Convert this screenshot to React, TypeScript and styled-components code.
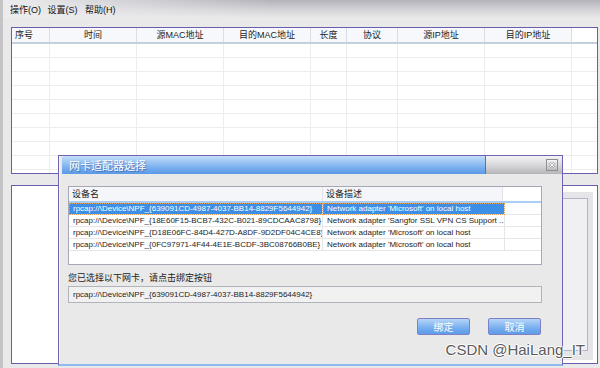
import styled, { createGlobalStyle } from 'styled-components';

const GlobalStyle = createGlobalStyle`
  html, body {
    margin: 0;
    padding: 0;
  }
  body {
    width: 600px;
    height: 368px;
    overflow: hidden;
    background: #e9e9e9;
    font-family: "Liberation Sans", "Noto Sans CJK SC", sans-serif;
  }
`;

const Window = styled.div`
  position: relative;
  width: 600px;
  height: 368px;
  box-sizing: border-box;
  border-left: 3px solid #c4c4c7;
  background: #e9e9e9;
  display: flex;
  flex-direction: column;
  overflow: hidden;
`;

const MenuBar = styled.div`
  height: 18px;
  display: flex;
  align-items: center;
  padding-left: 7px;
  background:
    linear-gradient(90deg, #ececee 0%, rgba(236, 236, 238, 0) 45%),
    linear-gradient(180deg, #b3b3bb 0%, #d6d6da 60%, #e9e9e9 100%);
`;

const MenuItem = styled.span`
  width: 37.5px;
  font-size: 9px;
  color: #111;
  white-space: nowrap;
`;

const Main = styled.div`
  flex: 1;
  display: flex;
  flex-direction: column;
  padding: 9px 2px 0 8px;
`;

const PacketTable = styled.div`
  height: 147px;
  box-sizing: border-box;
  border: 1px solid #6a5cae;
  background: #fff;
  overflow: hidden;
`;

const HeadRow = styled.div`
  display: flex;
  height: 16px;
  box-sizing: border-box;
  background: #f6f8fc;
  border-bottom: 2px solid #c4cfde;
`;

const HeadCell = styled.div<{ $w?: number; $left?: boolean }>`
  ${p => (p.$w ? `width: ${p.$w}px;` : 'flex: 1;')}
  flex-shrink: 0;
  box-sizing: border-box;
  border-right: 1px solid #dcdde2;
  font-size: 9px;
  line-height: 14px;
  color: #222;
  text-align: ${p => (p.$left ? 'left' : 'center')};
  padding-left: ${p => (p.$left ? '3px' : '0')};
  white-space: nowrap;
  &:last-child {
    border-right: none;
    background: #fff;
  }
`;

const BodyRow = styled.div`
  display: flex;
  height: 14px;
  box-sizing: border-box;
  border-bottom: 1px solid #ededed;
`;

const BodyCell = styled.div<{ $w?: number }>`
  ${p => (p.$w ? `width: ${p.$w}px;` : 'flex: 1;')}
  flex-shrink: 0;
  box-sizing: border-box;
  border-right: 1px solid #ededed;
  &:last-child {
    border-right: none;
  }
`;

const LowerPanel = styled.div`
  margin-top: 11px;
  height: 179px;
  box-sizing: border-box;
  border: 1px solid #6a5cae;
  background: #fff;
  display: flex;
`;

const LowerBlank = styled.div`
  flex: 1;
`;

const GroupColumn = styled.div`
  width: 200px;
  margin: 6px 4px 3px 0;
  background: #e5e5e7;
  display: flex;
  padding: 6px 5px 9px 6px;
  box-sizing: border-box;
`;

const GroupBox = styled.div`
  flex: 1;
  background: #f0f0f2;
  border: 1px solid #b4b4c8;
`;

const Dialog = styled.div`
  position: absolute;
  left: 55px;
  top: 155px;
  width: 505px;
  height: 211px;
  box-sizing: border-box;
  border: 1px solid #6f63b2;
  border-bottom: 2px solid #8dbbf0;
  background: #e9e9e9;
  box-shadow: inset 1px 0 0 #f7f7f7;
  display: flex;
  flex-direction: column;
`;

const TitleBar = styled.div`
  height: 18px;
  display: flex;
  flex-shrink: 0;
`;

const TitleBlue = styled.div`
  width: 424px;
  margin-left: 3px;
  box-sizing: border-box;
  border-right: 1px solid #6f63b2;
  border-top-left-radius: 3px;
  background: linear-gradient(180deg, #c4ddf9 0%, #8fbdf2 45%, #6aa4ea 80%, #5c9ae6 100%);
  color: #fff;
  font-family: "Noto Sans CJK SC", sans-serif;
  font-size: 11px;
  line-height: 18px;
  padding-left: 7px;
  text-shadow: 1px 1px 1px rgba(20, 40, 110, 0.45);
  white-space: nowrap;
`;

const TitleRest = styled.div`
  flex: 1;
  display: flex;
  align-items: center;
  justify-content: flex-end;
  padding-right: 4px;
  background: linear-gradient(180deg, #f4f4f4 0%, #d6d6d8 55%, #b4b4b8 100%);
`;

const CloseButton = styled.div`
  width: 12px;
  height: 12px;
  box-sizing: border-box;
  border: 1px solid #8c8c90;
  background: linear-gradient(180deg, #f6f6f6 0%, #bdbdc2 100%);
  display: flex;
  align-items: center;
  justify-content: center;
`;

const DialogBody = styled.div`
  flex: 1;
  display: flex;
  flex-direction: column;
  padding: 12px 20px 0 9px;
`;

const ListView = styled.div`
  height: 79px;
  box-sizing: border-box;
  border: 1px solid #a7a7b7;
  background: #fff;
  overflow: hidden;
`;

const ListHead = styled.div`
  display: flex;
  height: 16px;
  box-sizing: border-box;
  border-bottom: 2px solid #a9cdf3;
`;

const ListHeadCell = styled.div<{ $w?: number }>`
  ${p => (p.$w ? `width: ${p.$w}px;` : 'flex: 1;')}
  flex-shrink: 0;
  box-sizing: border-box;
  background: #f5f6f9;
  border-right: 1px solid #e2e2e8;
  font-family: "Noto Sans CJK SC", sans-serif;
  font-size: 9px;
  line-height: 14px;
  color: #222;
  padding-left: 3px;
  &:last-child {
    background: #fff;
    border-right: none;
  }
`;

const ListRow = styled.div`
  display: flex;
  height: 12px;
`;

const ListCell = styled.div<{ $w?: number; $selected?: boolean; $focus?: boolean }>`
  ${p => (p.$w ? `width: ${p.$w}px;` : 'flex: 1;')}
  flex-shrink: 0;
  box-sizing: border-box;
  border-right: 1px solid #e6e6e6;
  border-bottom: 1px solid #e6e6e6;
  background: ${p => (p.$selected ? '#3d8ee6' : 'transparent')};
  color: ${p => (p.$selected ? '#fff' : '#1c1c1c')};
  outline: ${p => (p.$focus ? '1px dotted #e3a158' : 'none')};
  outline-offset: -1px;
  font-size: 8px;
  line-height: 11px;
  padding-left: 4px;
  white-space: nowrap;
  overflow: hidden;
  &:last-child {
    background: transparent;
    border-right: none;
  }
`;

const Prompt = styled.div`
  margin-top: 6px;
  height: 13px;
  font-family: "Noto Sans CJK SC", sans-serif;
  font-size: 9px;
  line-height: 13px;
  color: #222;
`;

const PathField = styled.div`
  margin-top: 2px;
  height: 17px;
  box-sizing: border-box;
  border: 1px solid #b3b3bb;
  background: #f1f1f2;
  font-size: 8px;
  line-height: 15px;
  padding-left: 4px;
  color: #1c1c1c;
`;

const ButtonRow = styled.div`
  margin-top: 15px;
  display: flex;
  justify-content: flex-end;
  gap: 18px;
  padding-right: 1px;
`;

const DialogButton = styled.div`
  width: 53px;
  height: 17px;
  box-sizing: border-box;
  border: 1px solid #7f7fc4;
  border-radius: 2px;
  background: linear-gradient(180deg, #b6d5f8 0%, #86b8f1 45%, #6aa5ec 75%, #5f9de9 100%);
  color: #fff;
  font-family: "Noto Sans CJK SC", sans-serif;
  font-size: 10px;
  line-height: 15px;
  text-align: center;
`;

const Watermark = styled.div`
  position: absolute;
  right: 15px;
  top: 341px;
  font-family: "Liberation Sans", sans-serif;
  font-size: 15px;
  color: #5a5a5a;
  text-shadow: 1px 0 #fff, -1px 0 #fff, 0 1px #fff, 0 -1px #fff;
  white-space: nowrap;
`;

const columns = [
  { label: '序号', w: 38, left: true },
  { label: '时间', w: 87 },
  { label: '源MAC地址', w: 87 },
  { label: '目的MAC地址', w: 87 },
  { label: '长度', w: 36 },
  { label: '协议', w: 51 },
  { label: '源IP地址', w: 87 },
  { label: '目的IP地址', w: 87 },
  { label: '' },
];

const adapters = [
  {
    name: 'rpcap://\\Device\\NPF_{639091CD-4987-4037-BB14-8829F5644942}',
    desc: "Network adapter 'Microsoft' on local host",
  },
  {
    name: 'rpcap://\\Device\\NPF_{18E60F15-BCB7-432C-B021-89CDCAAC8798}',
    desc: "Network adapter 'Sangfor SSL VPN CS Support ...",
  },
  {
    name: 'rpcap://\\Device\\NPF_{D18E06FC-84D4-427D-A8DF-9D2DF04C4CE8}',
    desc: "Network adapter 'Microsoft' on local host",
  },
  {
    name: 'rpcap://\\Device\\NPF_{0FC97971-4F44-4E1E-BCDF-3BC08766B0BE}',
    desc: "Network adapter 'Microsoft' on local host",
  },
];

export default function App() {
  const emptyRows = Array.from({ length: 10 });
  const selected = 0;

  return (
    <Window>
      <GlobalStyle />
      <MenuBar>
        <MenuItem>操作(O)</MenuItem>
        <MenuItem>设置(S)</MenuItem>
        <MenuItem>帮助(H)</MenuItem>
      </MenuBar>

      <Main>
        <PacketTable>
          <HeadRow>
            {columns.map((c, i) => (
              <HeadCell key={i} $w={c.w} $left={c.left}>
                {c.label}
              </HeadCell>
            ))}
          </HeadRow>
          {emptyRows.map((_, r) => (
            <BodyRow key={r}>
              {columns.map((c, i) => (
                <BodyCell key={i} $w={c.w} />
              ))}
            </BodyRow>
          ))}
        </PacketTable>

        <LowerPanel>
          <LowerBlank />
          <GroupColumn>
            <GroupBox />
          </GroupColumn>
        </LowerPanel>
      </Main>

      <Dialog>
        <TitleBar>
          <TitleBlue>网卡适配器选择</TitleBlue>
          <TitleRest>
            <CloseButton>
              <svg width="8" height="8" viewBox="0 0 8 8">
                <path d="M1.5 1.5 L6.5 6.5 M6.5 1.5 L1.5 6.5" stroke="#7a7a80" strokeWidth="2.4" />
                <path d="M1.5 1.5 L6.5 6.5 M6.5 1.5 L1.5 6.5" stroke="#fff" strokeWidth="1.2" />
              </svg>
            </CloseButton>
          </TitleRest>
        </TitleBar>

        <DialogBody>
          <ListView>
            <ListHead>
              <ListHeadCell $w={254}>设备名</ListHeadCell>
              <ListHeadCell $w={180}>设备描述</ListHeadCell>
              <ListHeadCell />
            </ListHead>
            {adapters.map((a, i) => (
              <ListRow key={i}>
                <ListCell $w={254} $selected={i === selected} $focus={i === selected}>
                  {a.name}
                </ListCell>
                <ListCell $w={182} $selected={i === selected} $focus={i === selected}>
                  {a.desc}
                </ListCell>
                <ListCell />
              </ListRow>
            ))}
          </ListView>

          <Prompt>您已选择以下网卡，请点击绑定按钮</Prompt>
          <PathField>{adapters[selected].name}</PathField>

          <ButtonRow>
            <DialogButton>绑定</DialogButton>
            <DialogButton>取消</DialogButton>
          </ButtonRow>
        </DialogBody>
      </Dialog>

      <Watermark>CSDN @HaiLang_IT</Watermark>
    </Window>
  );
}
